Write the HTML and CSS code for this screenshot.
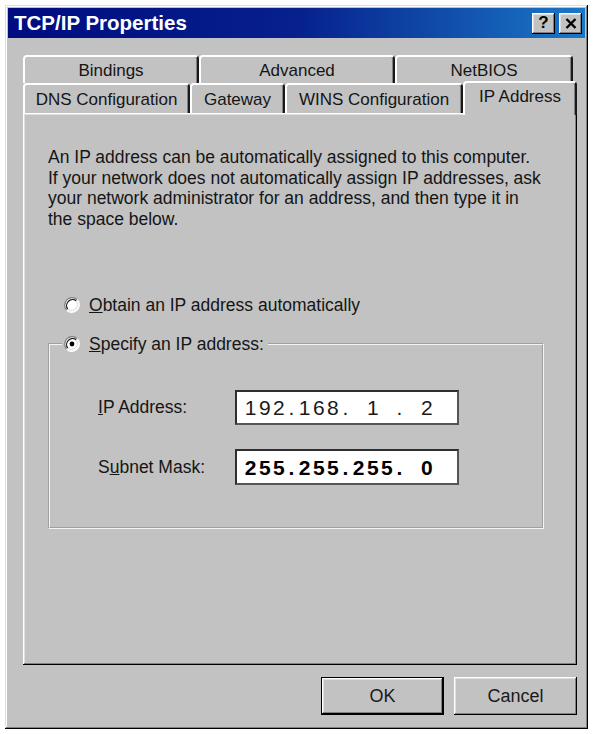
FILE: index.html
```html
<!DOCTYPE html>
<html>
<head>
<meta charset="utf-8">
<title>TCP/IP Properties</title>
<link rel="stylesheet" href="styles.css">
</head>
<body>
<div class="window">
  <div class="titlebar">
    <span class="title">TCP/IP Properties</span>
    <div class="tb-buttons">
      <span class="tb-btn help">?</span>
      <span class="tb-btn close"><svg width="12" height="11" viewBox="0 0 12 11"><path d="M1.5 1 L10.5 10 M10.5 1 L1.5 10" stroke="#000" stroke-width="2.4" fill="none"/></svg></span>
    </div>
  </div>

  <div class="tabs">
    <div class="tabrow back">
      <div class="tab t-bindings">Bindings</div>
      <div class="tab t-advanced">Advanced</div>
      <div class="tab t-netbios">NetBIOS</div>
    </div>
    <div class="tabrow front">
      <div class="tab t-dns">DNS Configuration</div>
      <div class="tab t-gateway">Gateway</div>
      <div class="tab t-wins">WINS Configuration</div>
      <div class="tab t-ip active">IP Address</div>
    </div>
  </div>

  <div class="panel">
    <p class="intro">An IP address can be automatically assigned to this computer.<br>If your network does not automatically assign IP addresses, ask<br>your network administrator for an address, and then type it in<br>the space below.</p>

    <div class="radio-row obtain">
      <svg class="radio" width="16" height="16" viewBox="0 0 16 16"><circle cx="8" cy="8" r="7" fill="#fff"/><path d="M2.7 13.3 A7.5 7.5 0 0 1 13.3 2.7" stroke="#808080" stroke-width="1.2" fill="none"/><path d="M13.3 2.7 A7.5 7.5 0 0 1 2.7 13.3" stroke="#fff" stroke-width="1.2" fill="none"/><path d="M3.8 12.2 A6 6 0 0 1 12.2 3.8" stroke="#111" stroke-width="1.2" fill="none"/><path d="M12.2 3.8 A6 6 0 0 1 3.8 12.2" stroke="#dfdfdf" stroke-width="1.2" fill="none"/></svg>
      <span><u>O</u>btain an IP address automatically</span>
    </div>

    <fieldset class="group">
      <legend class="radio-row">
        <svg class="radio" width="16" height="16" viewBox="0 0 16 16"><circle cx="8" cy="8" r="7" fill="#fff"/><path d="M2.7 13.3 A7.5 7.5 0 0 1 13.3 2.7" stroke="#808080" stroke-width="1.2" fill="none"/><path d="M13.3 2.7 A7.5 7.5 0 0 1 2.7 13.3" stroke="#fff" stroke-width="1.2" fill="none"/><path d="M3.8 12.2 A6 6 0 0 1 12.2 3.8" stroke="#111" stroke-width="1.2" fill="none"/><path d="M12.2 3.8 A6 6 0 0 1 3.8 12.2" stroke="#dfdfdf" stroke-width="1.2" fill="none"/><circle cx="8" cy="8" r="2.4" fill="#000"/></svg>
        <span><u>S</u>pecify an IP address:</span>
      </legend>
      <div class="field-row">
        <span class="field-label"><u>I</u>P Address:</span>
        <div class="ipbox">
          <span class="oct">192</span><span class="dot">.</span><span class="oct">168</span><span class="dot">.</span><span class="oct">1</span><span class="dot">.</span><span class="oct">2</span>
        </div>
      </div>
      <div class="field-row">
        <span class="field-label">S<u>u</u>bnet Mask:</span>
        <div class="ipbox bold">
          <span class="oct">255</span><span class="dot">.</span><span class="oct">255</span><span class="dot">.</span><span class="oct">255</span><span class="dot">.</span><span class="oct">0</span>
        </div>
      </div>
    </fieldset>
  </div>

  <div class="buttons">
    <button class="btn default">OK</button>
    <button class="btn">Cancel</button>
  </div>
</div>
</body>
</html>
```

FILE: styles.css
```css
* { box-sizing: border-box; }

body {
  margin: 0;
  background: #fff;
  font-family: "Liberation Sans", Arial, sans-serif;
  color: #151515;
}

.window {
  margin: 5px 0 0 5px;
  width: 583px;
  height: 724px;
  background: #c2c2c2;
  padding: 3px;
  display: flex;
  flex-direction: column;
  box-shadow: inset -1px -1px 0 #000, inset 1px 1px 0 #dfdfdf,
              inset -2px -2px 0 #808080, inset 2px 2px 0 #fff;
}

.titlebar {
  flex: none;
  height: 30px;
  display: flex;
  align-items: center;
  justify-content: space-between;
  padding: 0 3px 0 6px;
  background: linear-gradient(to right, #000c80 0%, #06208c 50%, #1a78c8 100%);
}

.title {
  color: #fff;
  font-weight: bold;
  font-size: 20.5px;
}

.tb-buttons { display: flex; gap: 4px; }

.tb-btn {
  width: 23px;
  height: 21px;
  background: #c2c2c2;
  display: flex;
  align-items: center;
  justify-content: center;
  font-weight: bold;
  font-size: 17px;
  color: #000;
  box-shadow: inset -1px -1px 0 #000, inset 1px 1px 0 #fff,
              inset -2px -2px 0 #808080, inset 2px 2px 0 #dfdfdf;
}

/* tabs */
.tabs { flex: none; margin: 17px 0 0 15px; }

.tabrow { display: flex; height: 28px; }
.tabrow.front { height: 30px; }

.tab {
  display: flex;
  align-items: center;
  justify-content: center;
  font-size: 17px;
  background: #c2c2c2;
  border-top: 2px solid #fff;
  border-left: 2px solid #fff;
  border-right: 2px solid #1a1a1a;
  border-radius: 4px 4px 0 0;
  box-shadow: inset -1px 0 0 #808080;
  padding-top: 2px;
}

.t-bindings { width: 176px; }
.t-advanced { width: 196px; }
.t-netbios { width: 178px; }
.t-dns { width: 167px; }
.t-gateway { width: 95px; }
.t-wins { width: 178px; }
.t-ip { width: 114px; }

.tab.active {
  align-self: flex-end;
  height: 34px;
  margin-bottom: -2px;
  z-index: 1;
  padding-top: 0;
  padding-bottom: 4px;
}

/* panel */
.panel {
  flex: none;
  margin-left: 15px;
  width: 554px;
  height: 552px;
  padding: 34px 0 0 25px;
  box-shadow: inset -1px -1px 0 #000, inset 1px 1px 0 #fff,
              inset -2px -2px 0 #808080, inset 2px 2px 0 #dfdfdf;
}

.intro {
  margin: 0;
  font-size: 17.5px;
  line-height: 20.5px;
}

.radio-row {
  display: flex;
  align-items: center;
  gap: 9px;
  height: 22px;
  font-size: 17.5px;
}

.radio { flex: none; }

.obtain { margin: 65px 0 0 16px; }

.group {
  margin: 17px 0 0 0;
  width: 496px;
  height: 196px;
  padding: 35px 0 0 12px;
  border: 2px groove #f4f4f4;
}

.group legend {
  padding: 0 4px 0 2px;
}

.field-row {
  display: flex;
  align-items: center;
  margin-left: 36px;
}

.field-row + .field-row { margin-top: 24px; }

.field-label {
  width: 137px;
  font-size: 17.5px;
}

.ipbox {
  width: 224px;
  height: 35px;
  background: #fff;
  display: flex;
  align-items: center;
  padding: 1px 0 0 4px;
  font-size: 21px;
  color: #1a1a1a;
  border: 2px solid;
  border-color: #2e2e2e #555 #555 #2e2e2e;
}

.ipbox.bold { font-weight: bold; color: #000; height: 36px; }

.oct {
  width: 47px;
  text-align: center;
  letter-spacing: 2.5px;
  padding-left: 3px;
}

.dot { width: 7px; text-align: center; }

/* buttons */
.buttons {
  flex: none;
  display: flex;
  justify-content: flex-end;
  gap: 10px;
  margin-top: 12px;
  padding-right: 8px;
}

.btn {
  width: 123px;
  height: 38px;
  font-family: "Liberation Sans", Arial, sans-serif;
  font-size: 18px;
  color: #1a1a1a;
  background: #c2c2c2;
  border: none;
  box-shadow: inset -1px -1px 0 #000, inset 1px 1px 0 #fff,
              inset -2px -2px 0 #808080, inset 2px 2px 0 #dfdfdf;
}

.btn.default {
  border: 1px solid #000;
  box-shadow: inset -1px -1px 0 #000, inset 1px 1px 0 #fff,
              inset -2px -2px 0 #808080, inset 2px 2px 0 #dfdfdf;
}
```
